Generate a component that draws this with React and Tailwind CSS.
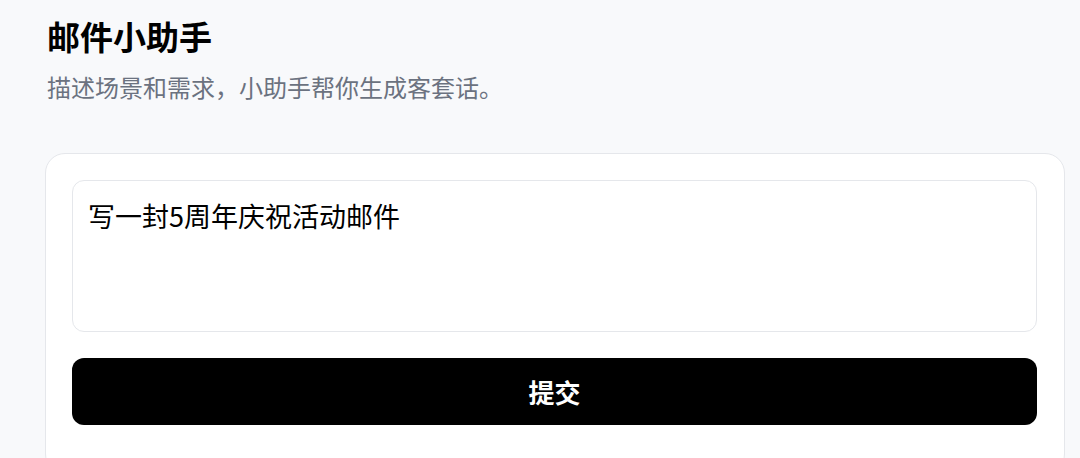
import React from "react";

const App = () => {
  return (
    <div
      className="min-h-screen bg-[#f8f9fb] pl-[45px] pr-4 pt-[12px]"
      style={{ fontFamily: '"Noto Sans CJK SC", "Noto Sans", sans-serif' }}
    >
      {/* Header */}
      <h1 className="text-[33px] font-bold leading-[48px] text-black pl-[2px]">
        邮件小助手
      </h1>
      <p className="mt-[10px] text-[24px] leading-[34px] text-[#6b7280] pl-[2px]">
        描述场景和需求，小助手帮你生成客套话。
      </p>

      {/* Form card */}
      <div className="mt-[49px] w-[1020px] rounded-[20px] border border-gray-200 bg-white pl-[26px] pr-[27px] pt-[26px] pb-12">
        <textarea
          readOnly
          value="写一封5周年庆祝活动邮件"
          className="block h-[152px] w-full resize-none rounded-xl border border-gray-200 px-[15px] pt-[16px] pb-3 text-[27px] leading-[38px] text-black outline-none"
        />
        <button
          type="button"
          className="mt-[26px] flex h-[67px] w-full items-center justify-center rounded-xl bg-black text-[26px] font-bold text-white"
        >
          提交
        </button>
      </div>
    </div>
  );
};

export default App;
